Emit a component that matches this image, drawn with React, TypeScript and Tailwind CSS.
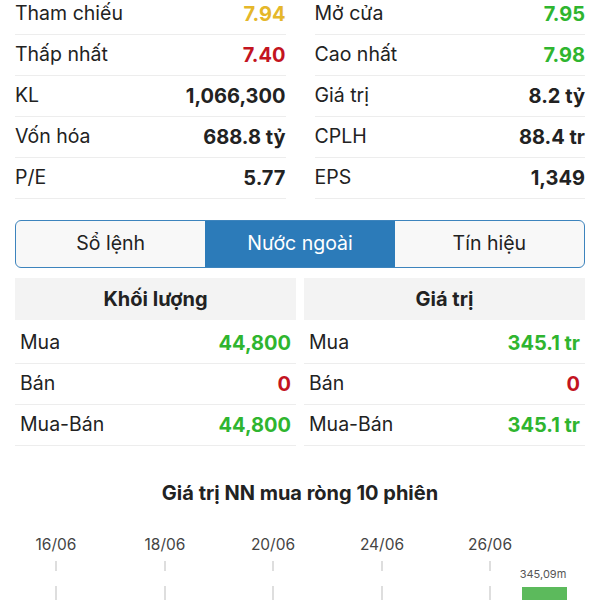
import React from 'react';

type Row = { label: string; value: string; color?: string };

const leftStats: Row[] = [
  { label: 'Tham chiếu', value: '7.94', color: 'text-[#e5b72a]' },
  { label: 'Thấp nhất', value: '7.40', color: 'text-[#c3141f]' },
  { label: 'KL', value: '1,066,300' },
  { label: 'Vốn hóa', value: '688.8 tỷ' },
  { label: 'P/E', value: '5.77' },
];

const rightStats: Row[] = [
  { label: 'Mở cửa', value: '7.95', color: 'text-[#2fb52f]' },
  { label: 'Cao nhất', value: '7.98', color: 'text-[#2fb52f]' },
  { label: 'Giá trị', value: '8.2 tỷ' },
  { label: 'CPLH', value: '88.4 tr' },
  { label: 'EPS', value: '1,349' },
];

const volRows: Row[] = [
  { label: 'Mua', value: '44,800', color: 'text-[#2fb52f]' },
  { label: 'Bán', value: '0', color: 'text-[#c3141f]' },
  { label: 'Mua-Bán', value: '44,800', color: 'text-[#2fb52f]' },
];

const valRows: Row[] = [
  { label: 'Mua', value: '345.1 tr', color: 'text-[#2fb52f]' },
  { label: 'Bán', value: '0', color: 'text-[#c3141f]' },
  { label: 'Mua-Bán', value: '345.1 tr', color: 'text-[#2fb52f]' },
];

const tabs = ['Sổ lệnh', 'Nước ngoài', 'Tín hiệu'];
const dates = [
  { d: '16/06', x: 56 },
  { d: '18/06', x: 165 },
  { d: '20/06', x: 273 },
  { d: '24/06', x: 382 },
  { d: '26/06', x: 490 },
];

const StatColumn = ({ rows }: { rows: Row[] }) => (
  <div className="flex-1">
    {rows.map((r) => (
      <div key={r.label} className="h-[41px] flex items-center justify-between border-b border-[#ededed]">
        <span className="text-[19.5px] text-[#222]">{r.label}</span>
        <span className={`text-[20px] font-bold ${r.color ?? 'text-[#222]'}`}>{r.value}</span>
      </div>
    ))}
  </div>
);

const ForeignColumn = ({ title, rows }: { title: string; rows: Row[] }) => (
  <div className="flex-1">
    <div className="h-[42px] bg-[#f3f3f3] flex items-center justify-center text-[20px] font-bold text-[#222]">
      {title}
    </div>
    <div className="mt-[3px]">
      {rows.map((r) => (
        <div key={r.label} className="h-[41px] px-[5px] flex items-center justify-between border-b border-[#ededed]">
          <span className="text-[19.5px] text-[#222]">{r.label}</span>
          <span className={`text-[20px] font-bold ${r.color}`}>{r.value}</span>
        </div>
      ))}
    </div>
  </div>
);

export default function App() {
  return (
    <div
      className="w-[600px] h-[600px] overflow-hidden bg-white"
      style={{ fontFamily: 'Inter, "Noto Sans", sans-serif' }}
    >
      {/* Thống kê giá */}
      <div className="-mt-[6px] px-[15px] flex gap-[29px]">
        <StatColumn rows={leftStats} />
        <StatColumn rows={rightStats} />
      </div>

      {/* Tabs */}
      <div className="mt-[21px] mx-[15px] h-[48px] flex rounded-[6px] border border-[#3d84bd] overflow-hidden bg-[#f8f8f8]">
        {tabs.map((t, i) => (
          <div
            key={t}
            className={`flex-1 flex items-center justify-center text-[19.5px] ${
              i === 1 ? 'bg-[#2c7bb9] text-white' : 'text-[#222]'
            }`}
          >
            {t}
          </div>
        ))}
      </div>

      {/* Nước ngoài */}
      <div className="mt-[10px] px-[15px] flex gap-[8px]">
        <ForeignColumn title="Khối lượng" rows={volRows} />
        <ForeignColumn title="Giá trị" rows={valRows} />
      </div>

      <div className="mt-[34px] h-[27px] leading-[27px] text-center text-[20px] font-bold text-[#222]">
        Giá trị NN mua ròng 10 phiên
      </div>

      {/* Biểu đồ */}
      <svg width="600" height="80" className="mt-[14px] block">
        {dates.map((p) => (
          <g key={p.d}>
            <text x={p.x} y="29" textAnchor="middle" fontSize="15.5" fill="#444">
              {p.d}
            </text>
            <line x1={p.x} y1="40" x2={p.x} y2="50" stroke="#bdbdbd" strokeWidth="1" />
            <line x1={p.x} y1="65" x2={p.x} y2="80" stroke="#bdbdbd" strokeWidth="1" />
          </g>
        ))}
        <text x="543" y="57" textAnchor="middle" fontSize="11" fill="#555">
          345,09m
        </text>
        <rect x="522" y="66" width="45" height="20" fill="#5cba5c" />
      </svg>
    </div>
  );
}
